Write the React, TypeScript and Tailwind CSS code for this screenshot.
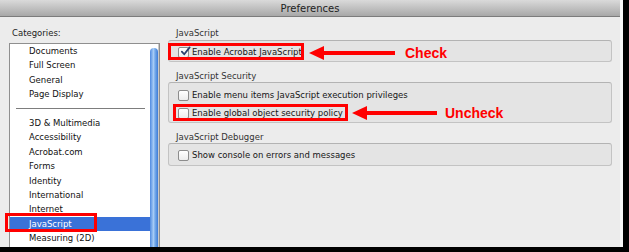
import React from "react";

const categories: (string | null)[] = [
  "Documents",
  "Full Screen",
  "General",
  "Page Display",
  null,
  "3D & Multimedia",
  "Accessibility",
  "Acrobat.com",
  "Forms",
  "Identity",
  "International",
  "Internet",
  "JavaScript",
  "Measuring (2D)",
];

function CheckBox({ checked = false }: { checked?: boolean }) {
  return (
    <div className="relative w-[11px] h-[11px] shrink-0 rounded-[2px] border border-[#8c8c8c] bg-[linear-gradient(180deg,#ffffff,#ececec)] shadow-[inset_0_1px_0_#fff]">
      {checked && (
        <svg viewBox="0 0 12 12" className="absolute -top-[2px] left-[1px] w-[11px] h-[11px]">
          <path d="M2 6.2 L4.6 9 L10.5 1.5" fill="none" stroke="#2b3f6e" strokeWidth="2" strokeLinecap="round" strokeLinejoin="round" />
        </svg>
      )}
    </div>
  );
}

function Option({ label, checked }: { label: string; checked?: boolean }) {
  return (
    <div className="flex items-center gap-[3px] h-[18px]">
      <CheckBox checked={checked} />
      <span className="text-[8.5px] leading-none text-[#161616]">{label}</span>
    </div>
  );
}

function Group({ title, children, className }: { title: string; children: React.ReactNode; className: string }) {
  return (
    <div>
      <div className="pl-[8px] h-[12px] text-[8.5px] leading-[12px] text-[#333]">{title}</div>
      <div className={`rounded-[3px] border border-[#c3c3c3] border-t-[#b3b3b3] bg-[#e4e4e4] pl-[9px] ${className}`}>
        {children}
      </div>
    </div>
  );
}

export default function App() {
  return (
    <div className="relative w-[629px] h-[252px] bg-black overflow-hidden font-['DejaVu_Sans',sans-serif]">
      <div className="w-[623px] h-[247px] bg-[#ececec] border-r-[3px] border-[#f7f7f7] flex flex-col">
        {/* Title bar */}
        <div className="h-[17px] shrink-0 flex items-center justify-center bg-[linear-gradient(180deg,#dadada,#a8a8a8)] border-b border-[#7c7c7c] text-[10px] text-[#222]">
          Preferences
        </div>

        <div className="flex flex-1 min-h-0 pt-[10px]">
          {/* Categories */}
          <div className="w-[168px] shrink-0 pl-[9px] flex flex-col">
            <div className="pl-[3px] h-[12px] text-[8.5px] leading-[12px] text-[#222]">Categories:</div>
            <div className="mt-[4px] w-[151px] flex-1 min-h-0 flex border border-[#8f8f8f] border-b-0 bg-white overflow-hidden">
              <div className="w-[140px] shrink-0">
                {categories.map((c, i) =>
                  c === null ? (
                    <div key={i} className="h-[14.4px] flex items-center pl-[6px] pr-[5px]">
                      <div className="h-px w-full bg-[#7d7d7d]" />
                    </div>
                  ) : (
                    <div
                      key={i}
                      className={`h-[14.4px] leading-[14.4px] pl-[19px] text-[8.5px] ${
                        c === "JavaScript" ? "bg-[#3a72d8] text-white" : "text-[#111]"
                      }`}
                    >
                      {c}
                    </div>
                  )
                )}
              </div>
              <div className="w-[8px] shrink-0 pt-[4px] flex flex-col">
                <div className="flex-1 rounded-t-full bg-[linear-gradient(90deg,#4f8ae0,#a8cdf6_45%,#7aaeec_60%,#3c7bd6)]" />
              </div>
              <div className="w-[2px] shrink-0 bg-[#c9c9c9]" />
            </div>
          </div>

          {/* Settings */}
          <div className="w-[444px] shrink-0 flex flex-col gap-[8px]">
            <Group title="JavaScript" className="mt-[1px] h-[22px] pt-[2px]">
              <Option label="Enable Acrobat JavaScript" checked />
            </Group>
            <Group title="JavaScript Security" className="h-[41px] pt-[3px]">
              <Option label="Enable menu items JavaScript execution privileges" />
              <Option label="Enable global object security policy" />
            </Group>
            <Group title="JavaScript Debugger" className="h-[23px] pt-[2px]">
              <Option label="Show console on errors and messages" />
            </Group>
          </div>
        </div>
      </div>

      {/* Annotations */}
      <div className="absolute left-[168px] top-[43px] w-[136px] h-[17px] border-[3px] border-[#ff0000]" />
      <div className="absolute left-[173px] top-[104px] w-[175px] h-[17px] border-[3px] border-[#ff0000]" />
      <div className="absolute left-[5px] top-[213px] w-[92px] h-[19px] border-[3px] border-[#ff0000]" />

      <svg className="absolute left-[307px] top-[44px]" width="92" height="18" viewBox="0 0 92 18">
        <polygon points="2,9 17,2 17,16" fill="#ff0000" />
        <rect x="16" y="7" width="72" height="4" fill="#ff0000" />
      </svg>
      <svg className="absolute left-[350px] top-[104px]" width="92" height="18" viewBox="0 0 92 18">
        <polygon points="2,9 17,2 17,16" fill="#ff0000" />
        <rect x="16" y="7" width="71" height="4" fill="#ff0000" />
      </svg>

      <div className="absolute left-[405px] top-[44px] text-[14px] leading-[18px] font-bold text-[#ff0000] font-['Liberation_Sans',sans-serif]">
        Check
      </div>
      <div className="absolute left-[445px] top-[104px] text-[14px] leading-[18px] font-bold text-[#ff0000] font-['Liberation_Sans',sans-serif]">
        Uncheck
      </div>
    </div>
  );
}
